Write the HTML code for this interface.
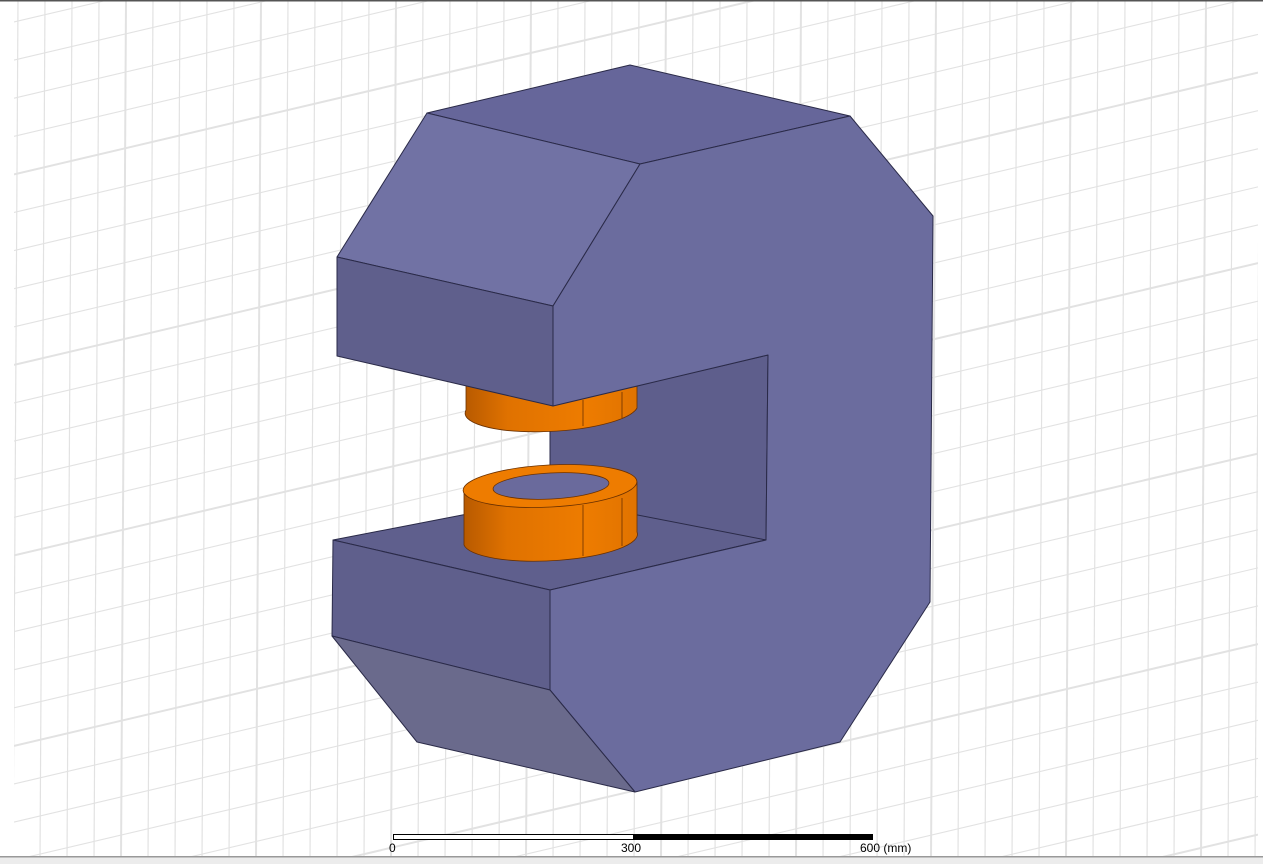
<!DOCTYPE html>
<html><head><style>
html,body{margin:0;padding:0;width:1263px;height:864px;overflow:hidden;background:#fff;font-family:"Liberation Sans",sans-serif}
svg{display:block}
</style></head><body>
<svg width="1263" height="864" viewBox="0 0 1263 864" xmlns="http://www.w3.org/2000/svg">
<defs>
<clipPath id="g"><rect x="14" y="0" width="1244" height="856"/></clipPath>
<linearGradient id="cu" x1="0" x2="1" y1="0" y2="0">
<stop offset="0" stop-color="#b85a00"/><stop offset="0.25" stop-color="#e07200"/><stop offset="0.7" stop-color="#ee7c00"/><stop offset="1" stop-color="#e07300"/>
</linearGradient>
</defs>
<rect width="1263" height="864" fill="#fff"/>
<g clip-path="url(#g)" stroke="#e2e2e2" fill="none">
<g id="v"></g>
</g>
<g stroke="#2a2a48" stroke-width="1" stroke-linejoin="round">
<polygon points="550,406 768,355 766,540 550,505" fill="#5e5e8c"/>
<polygon points="333,540 550,590 766,540 550,498" fill="#5f5f8d"/>
</g>
<g stroke="#6a3000" stroke-width="0.8">
<path d="M466,380 L637,380 L637,408 A85 22 -3 0 1 466,410 Z" fill="url(#cu)"/>
<line x1="583" y1="400" x2="583" y2="426"/><line x1="622" y1="392" x2="622" y2="418"/>
</g>
<g stroke="#6a3000" stroke-width="0.8">
<path d="M464,490 L637,482 L637,532 A86 22 -3 0 1 464,545 Z" fill="url(#cu)"/>
<ellipse cx="550" cy="486" rx="87" ry="21" transform="rotate(-3 550 486)" fill="#ee7c00"/>
<ellipse cx="551" cy="486" rx="58" ry="13" transform="rotate(-3 551 486)" fill="#6a6a9c"/>
<line x1="583" y1="505" x2="583" y2="556"/><line x1="622" y1="498" x2="622" y2="546"/>
</g>
<g stroke="#2a2a48" stroke-width="1" stroke-linejoin="round">
<polygon points="427,113 630,65 850,116 640,164" fill="#66669a"/>
<polygon points="427,113 640,164 553,306 337,257" fill="#7172a4"/>
<polygon points="337,257 553,306 553,406 337,356" fill="#5f5f8c"/>
<polygon points="640,164 850,116 933,216 930,602 840,742 635,792 550,690 550,590 766,540 768,355 553,406 553,306" fill="#6b6c9e"/>
<polygon points="333,540 550,590 550,690 332,636" fill="#5f5f8c"/>
<polygon points="332,636 550,690 635,792 417,742" fill="#6a6a8c"/>
</g>
<rect x="393.5" y="834.5" width="479" height="5" fill="#fff" stroke="#000"/>
<rect x="633" y="834" width="240" height="6" fill="#000"/>
<g font-size="12" fill="#000">
<text x="389" y="852">0</text><text x="621" y="852">300</text><text x="860" y="852">600 (mm)</text>
</g>
<rect x="0" y="0" width="1263" height="1.5" fill="#555"/>
<rect x="0" y="856" width="1263" height="8" fill="#ececec"/>
<rect x="0" y="856" width="1263" height="1.5" fill="#999"/>
</svg>
<script>
(function(){
var ns="http://www.w3.org/2000/svg",g=document.getElementById('v');
for(var k=-2;k<50;k++){var x=16+27*k;var l=document.createElementNS(ns,'line');
l.setAttribute('x1',x+2);l.setAttribute('y1',0);l.setAttribute('x2',x-3);l.setAttribute('y2',860);
l.setAttribute('stroke-width',(k%5==4)?2:1.2);g.appendChild(l);}
for(var k=-3;k<40;k++){var y=22+38.1*k;var l=document.createElementNS(ns,'line');
l.setAttribute('x1',14);l.setAttribute('y1',y);l.setAttribute('x2',1258);l.setAttribute('y2',y-1244*0.235);
l.setAttribute('stroke-width',(k%5==4)?2:1.1);g.appendChild(l);}
})();
</script>
</body></html>
